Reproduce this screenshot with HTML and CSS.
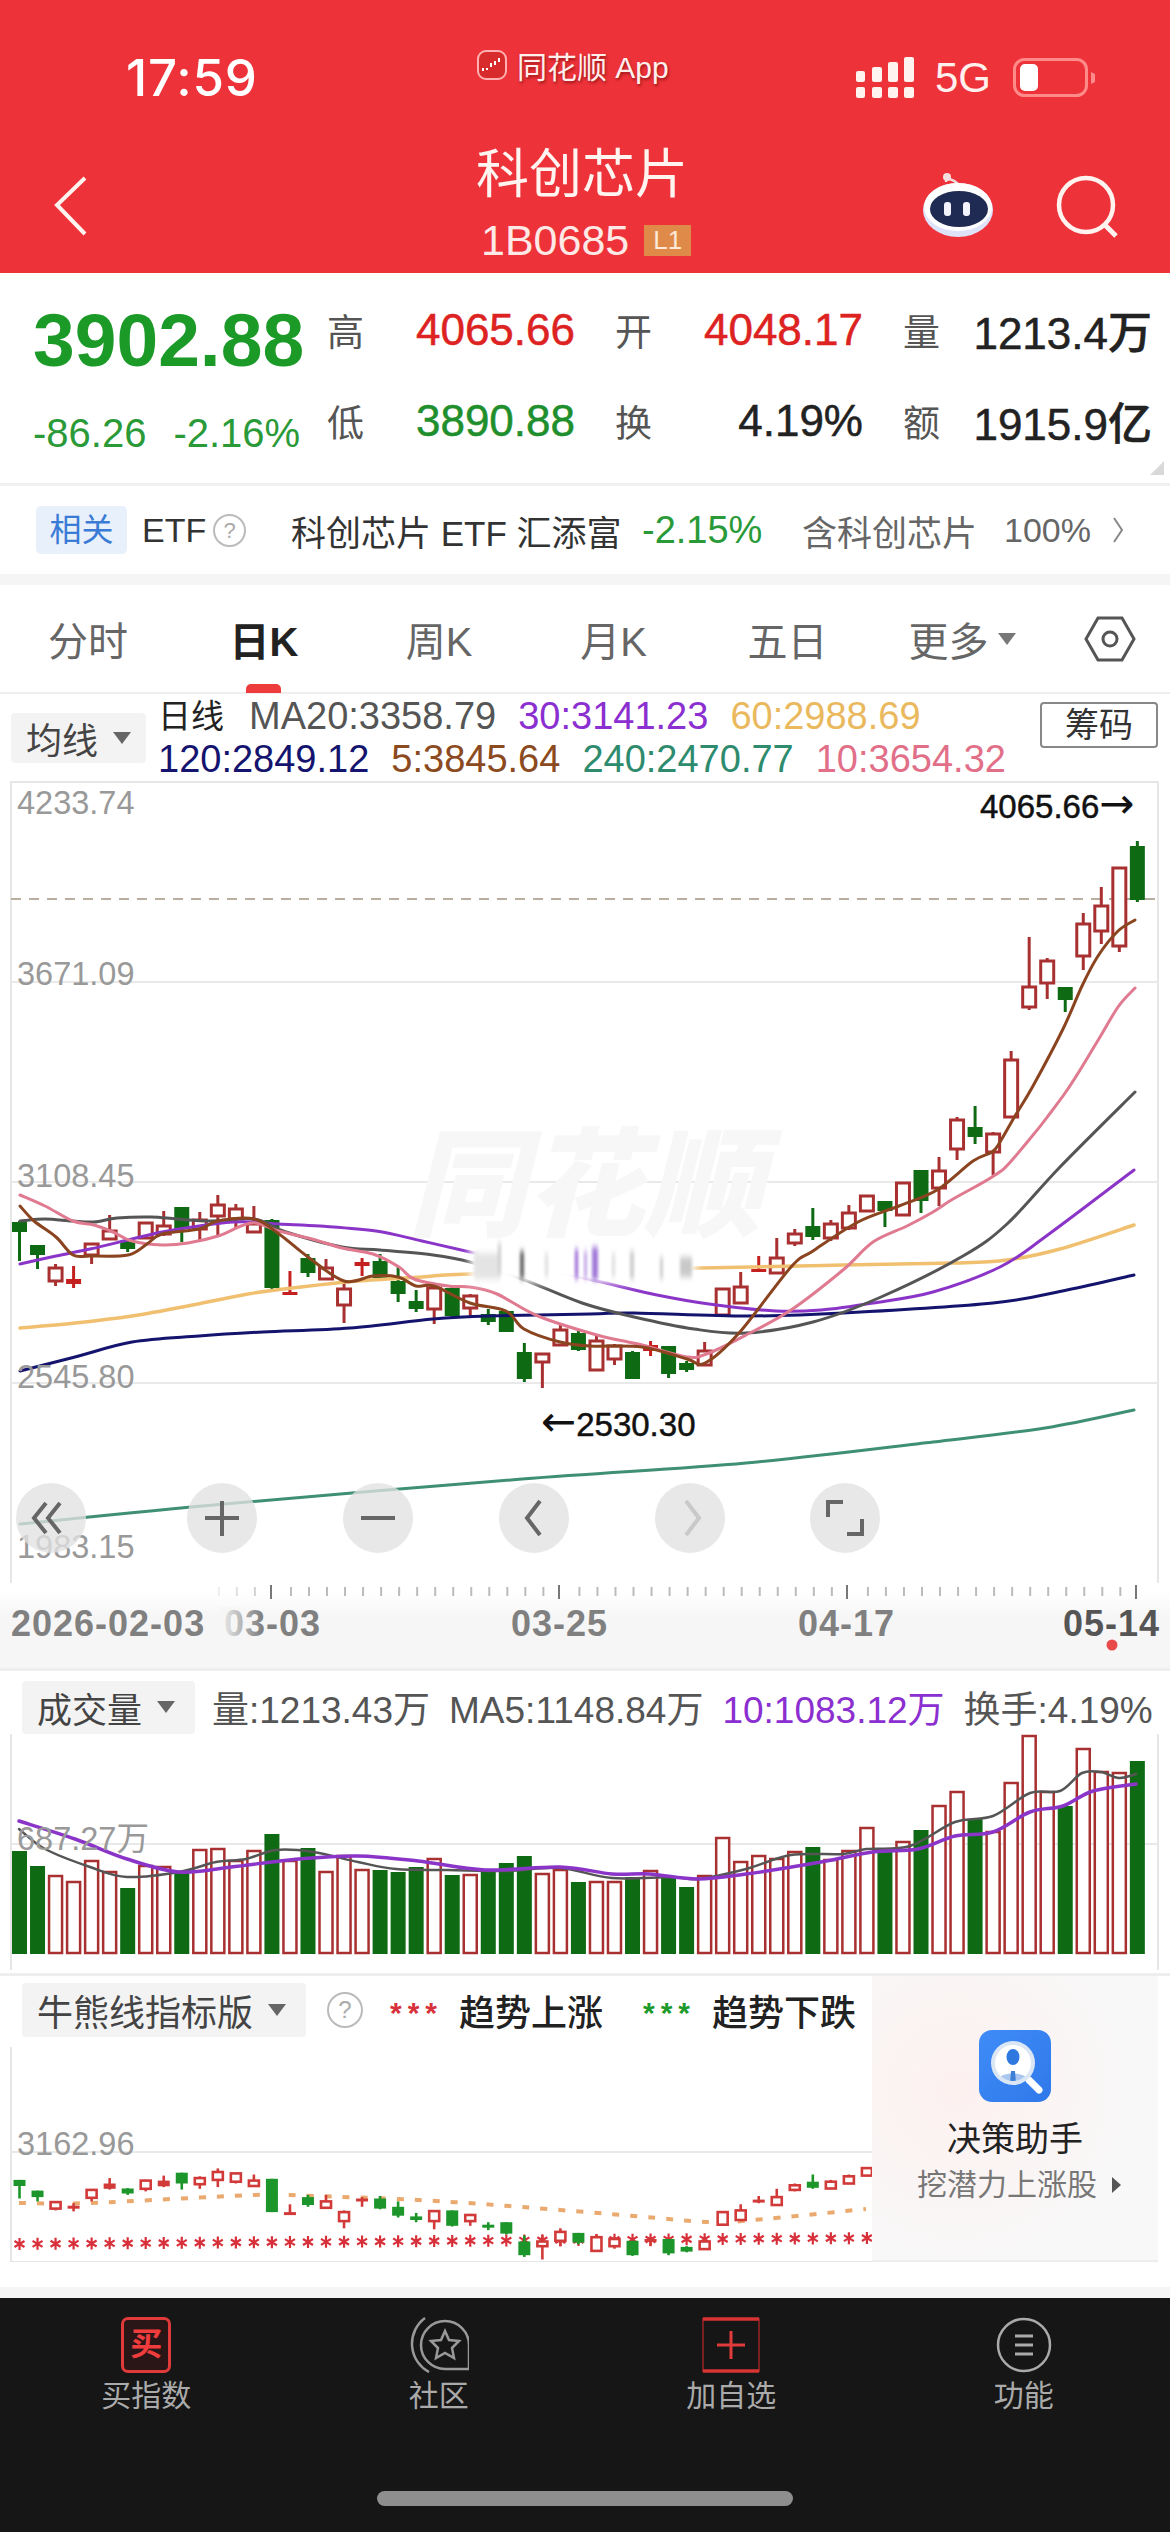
FILE: index.html
```html
<!DOCTYPE html>
<html lang="zh-CN">
<head>
<meta charset="utf-8">
<title>科创芯片</title>
<link rel="stylesheet" href="styles.css">
</head>
<body>
<header class="topbar">
  <div class="status">
    <div class="time">17:59</div>
    <div class="carrier">
      <svg class="logo" viewBox="0 0 30 30"><rect x="1" y="1" width="28" height="28" rx="8" fill="#d82b2b" stroke="#ffb0b0" stroke-width="2"/><path d="M6 21v-3M10 20v-2M14 17v-4M18 15v-4M22 12V8" stroke="#fff" stroke-width="2"/></svg>
      <span>同花顺 App</span>
    </div>
    <div class="sys">
      <svg class="signal" viewBox="0 0 58 41" fill="#fff3ef"><rect x="0" y="14" width="9" height="11" rx="2"/><rect x="16" y="10" width="10" height="15" rx="2"/><rect x="32" y="5" width="10" height="20" rx="2"/><rect x="48" y="0" width="10" height="25" rx="2"/><rect x="0" y="30" width="9" height="11" rx="2"/><rect x="16" y="30" width="10" height="11" rx="2"/><rect x="32" y="30" width="10" height="11" rx="2"/><rect x="48" y="30" width="10" height="11" rx="2"/></svg>
      <span class="net">5G</span>
      <svg class="battery" viewBox="0 0 83 40"><rect x="1.5" y="1.5" width="72" height="36" rx="10" fill="none" stroke="#ff8a8a" stroke-width="3"/><rect x="7" y="6" width="18" height="27" rx="5" fill="#fff"/><path d="M78 14l4 2v8l-4 2z" fill="#ff8a8a"/></svg>
    </div>
  </div>
  <div class="titlebar">
    <svg class="back" viewBox="0 0 34 60"><path d="M31 2L3 29l28 29" fill="none" stroke="#fff3f0" stroke-width="4"/></svg>
    <div class="title-block">
      <h1 class="title">科创芯片</h1>
      <div class="code"><span>1B0685</span><span class="lvl">L1</span></div>
    </div>
    <div class="actions">
      <svg class="robot" viewBox="0 0 72 66"><path d="M24 10C24 5 31 7 36 12" fill="none" stroke="#f3dede" stroke-width="2.5"/><circle cx="25" cy="5" r="4" fill="#f6dede"/><ellipse cx="36" cy="38" rx="35" ry="27" fill="#dfe3fa"/><ellipse cx="36" cy="35" rx="34" ry="24" fill="#fff"/><ellipse cx="37" cy="37" rx="29" ry="18" fill="#1f2b52"/><rect x="22" y="30" width="7" height="14" rx="3" fill="#f4f4ff"/><rect x="41" y="30" width="7" height="14" rx="3" fill="#f4f4ff"/></svg>
      <svg class="search" viewBox="0 0 64 64"><circle cx="30" cy="30" r="27" fill="none" stroke="#fff3f0" stroke-width="4.5"/><path d="M49 50l11 11" stroke="#fff3f0" stroke-width="5"/></svg>
    </div>
  </div>
</header>

<section class="quote">
  <div class="price-col">
    <div class="price">3902.88</div>
    <div class="change"><span>-86.26</span><span>-2.16%</span></div>
  </div>
  <div class="stats">
    <div class="stat"><span class="k">高</span><span class="v up">4065.66</span></div>
    <div class="stat"><span class="k">开</span><span class="v up">4048.17</span></div>
    <div class="stat"><span class="k">量</span><span class="v">1213.4万</span></div>
    <div class="stat"><span class="k">低</span><span class="v down">3890.88</span></div>
    <div class="stat"><span class="k">换</span><span class="v">4.19%</span></div>
    <div class="stat"><span class="k">额</span><span class="v">1915.9亿</span></div>
  </div>
  <span class="corner"></span>
</section>

<section class="related">
  <span class="badge">相关</span>
  <span class="etf">ETF</span>
  <span class="qmark">?</span>
  <span class="fund">科创芯片 ETF 汇添富</span>
  <span class="pct">-2.15%</span>
  <span class="incl">含科创芯片</span>
  <span class="incl-v">100%</span>
  <svg class="chev" viewBox="0 0 12 28"><path d="M2 2l8 12-8 12" fill="none" stroke="#888" stroke-width="2"/></svg>
</section>

<nav class="tabs">
  <span class="tab">分时</span>
  <span class="tab active">日K</span>
  <span class="tab">周K</span>
  <span class="tab">月K</span>
  <span class="tab">五日</span>
  <span class="tab">更多<i class="tri tri-sm"></i></span>
  <span class="tab"><svg class="hex" viewBox="0 0 52 46"><path d="M14 2h24l12 21-12 21H14L2 23z" fill="none" stroke="#555" stroke-width="3"/><circle cx="26" cy="23" r="7" fill="none" stroke="#555" stroke-width="3"/></svg></span>
</nav>

<section class="ma-head">
  <div class="sel sel-ma">均线<i class="tri"></i></div>
  <div class="ma-rows">
    <div class="ma-row"><span class="day">日线</span><span class="c20">MA20:3358.79</span><span class="c30">30:3141.23</span><span class="c60">60:2988.69</span></div>
    <div class="ma-row"><span class="c120">120:2849.12</span><span class="c5">5:3845.64</span><span class="c240">240:2470.77</span><span class="c10">10:3654.32</span></div>
  </div>
  <div class="chip">筹码</div>
</section>

<svg class="chart-main" viewBox="0 782 1170 802">
  <defs>
    <filter id="soft" x="-20%" y="-50%" width="140%" height="200%"><feGaussianBlur stdDeviation="4"/></filter>
    <filter id="streak" x="-20%" y="-50%" width="140%" height="200%"><feGaussianBlur stdDeviation="1.6 3"/></filter>
  </defs>
  <path class="frame" d="M11 1584V783H1158V1584"/>
  <path class="grid" d="M11 983H1158M11 1183H1158M11 1384H1158"/>
  <path class="dash" d="M11 900H1158"/>
  <text class="mark" x="408" y="1228">同花顺</text>
  <g id="candles"></g>
  <g id="lines"></g>
  <rect x="470" y="1246" width="226" height="38" fill="#fff" filter="url(#soft)"/>
  <g filter="url(#streak)">
    <rect x="474" y="1254" width="26" height="26" fill="#e4e4e4"/>
    <rect x="498" y="1244" width="3" height="32" fill="#ccc"/>
    <rect x="520" y="1252" width="4" height="28" fill="#666"/>
    <rect x="545" y="1254" width="3" height="24" fill="#ddd"/>
    <rect x="575" y="1250" width="3" height="30" fill="#9a63d6"/>
    <rect x="584" y="1252" width="3" height="28" fill="#c3a4e8"/>
    <rect x="592" y="1248" width="6" height="33" fill="#a27ad8"/>
    <rect x="612" y="1254" width="3" height="24" fill="#ddd"/>
    <rect x="630" y="1252" width="4" height="28" fill="#ccc"/>
    <rect x="660" y="1258" width="3" height="22" fill="#ccc"/>
    <rect x="680" y="1258" width="12" height="20" fill="#c9c9c9"/>
  </g>
  <text class="axis" x="17" y="815">4233.74</text>
  <text class="axis" x="17" y="986">3671.09</text>
  <text class="axis" x="17" y="1188">3108.45</text>
  <text class="axis" x="17" y="1389">2545.80</text>
  <text class="axis" x="17" y="1559">1983.15</text>
  <text class="peak" x="980" y="819">4065.66<tspan class="arr">→</tspan></text>
  <text class="peak" x="541" y="1437"><tspan class="arr">←</tspan>2530.30</text>
  <g class="tool">
    <circle cx="51" cy="1519" r="35"/><circle cx="222" cy="1519" r="35"/><circle cx="378" cy="1519" r="35"/><circle cx="534" cy="1519" r="35"/><circle cx="690" cy="1519" r="35"/><circle cx="845" cy="1519" r="35"/>
    <path d="M46 1504l-12 15 12 15M60 1504l-12 15 12 15"/>
    <path d="M205 1519h34M222 1502v35"/>
    <path d="M361 1519h34"/>
    <path d="M540 1502l-13 17 13 17"/>
    <path class="dim" d="M686 1502l13 17-13 17"/>
    <path d="M828 1518v-15h15M862 1520v15h-15"/>
  </g>
</svg>

<div class="axis-bar">
  <svg viewBox="0 1584 1170 76">
    <defs><linearGradient id="fade" x1="0" x2="1" y1="0" y2="0"><stop offset="0" stop-color="#f6f6f6" stop-opacity=".95"/><stop offset="1" stop-color="#f6f6f6" stop-opacity="0"/></linearGradient></defs>
    <g id="ticks"></g>
    <text class="date" x="11" y="1637">2026-02-03</text>
    <text class="date" x="224" y="1637">03-03</text>
    <rect x="220" y="1608" width="42" height="36" fill="url(#fade)"/>
    <text class="date" x="511" y="1637">03-25</text>
    <text class="date" x="798" y="1637">04-17</text>
    <text class="date last" x="1063" y="1637">05-14</text>
    <circle cx="1112" cy="1646" r="5.5" fill="#e84a4a"/>
  </svg>
</div>

<section class="vol">
  <div class="vol-head">
    <div class="sel sel-vol">成交量<i class="tri"></i></div>
    <span class="vol-t">量:1213.43万</span>
    <span class="vol-t">MA5:1148.84万</span>
    <span class="vol-t c30">10:1083.12万</span>
    <span class="vol-t">换手:4.19%</span>
  </div>
  <svg class="vol-chart" viewBox="0 1735 1170 236">
    <path class="frame" d="M11 1735V1971M1158 1735V1971"/>
    <path class="grid" d="M11 1845H1158"/>
    <g id="bars"></g>
    <g id="vlines"></g>
    <text class="axis" x="17" y="1851">687.27万</text>
  </svg>
</section>

<section class="bb">
  <div class="bb-left">
    <div class="bb-head">
      <div class="sel sel-bb">牛熊线指标版<i class="tri"></i></div>
      <span class="qmark q2">?</span>
      <span class="stars red">***</span><span class="leg">趋势上涨</span>
      <span class="stars green">***</span><span class="leg">趋势下跌</span>
    </div>
    <svg class="bb-chart" viewBox="0 2045 872 215">
      <path class="frame" d="M11 2045V2260H872"/>
      <path class="grid" d="M11 2150H872"/>
      <g id="mini"></g>
      <text class="axis" x="17" y="2153">3162.96</text>
    </svg>
  </div>
  <aside class="assist">
    <svg class="assist-ic" viewBox="0 0 72 72"><defs><linearGradient id="ib" x1="0" y1="0" x2="1" y2="1"><stop offset="0" stop-color="#3f8cf8"/><stop offset="1" stop-color="#2f78ea"/></linearGradient><clipPath id="lens"><circle cx="34" cy="33" r="18"/></clipPath></defs><rect width="72" height="72" rx="13" fill="url(#ib)"/><path d="M50 50l10 10" stroke="#fff" stroke-width="7" stroke-linecap="round"/><circle cx="34" cy="33" r="22" fill="#dbe6f5"/><circle cx="34" cy="33" r="18" fill="#fff"/><g clip-path="url(#lens)"><path d="M16 54c0-14 36-14 36 0z" fill="#a9c7ef"/><path d="M32 41h4l1 13h-6z" fill="#3f7fd8"/></g><ellipse cx="34" cy="27" rx="6.5" ry="8" fill="#2f78e0"/></svg>
    <div class="assist-t">决策助手</div>
    <div class="assist-s">挖潜力上涨股<i class="tri-r"></i></div>
  </aside>
</section>
<div class="band"></div>

<footer class="bottom">
  <div class="navs">
    <div class="nav-i">
      <span class="buy">买</span>
      <span class="lab">买指数</span>
    </div>
    <div class="nav-i">
      <svg class="ic" viewBox="0 0 60 56"><path d="M60 52H36A24 24 0 1 1 60 28Z" fill="none" stroke="#999" stroke-width="2.5"/><path d="M16 1A32 32 0 0 0 20 55" fill="none" stroke="#999" stroke-width="2.5"/><path d="M36 14l4 9 10 1-7 7 2 10-9-5-9 5 2-10-7-7 10-1z" fill="none" stroke="#999" stroke-width="2.5"/></svg>
      <span class="lab">社区</span>
    </div>
    <div class="nav-i">
      <svg class="ic" viewBox="0 0 60 56"><rect x="2" y="2" width="56" height="52" fill="none" stroke="#7a2020" stroke-width="2"/><path d="M2 2H58M2 54H58" stroke="#d93333" stroke-width="3.5"/><path d="M16 28h28M30 14v28" stroke="#e03a3a" stroke-width="3"/></svg>
      <span class="lab">加自选</span>
    </div>
    <div class="nav-i">
      <svg class="ic" viewBox="0 0 60 56"><circle cx="30" cy="28" r="26" fill="none" stroke="#aaa" stroke-width="2.5"/><path d="M21 19h18M21 28h18M21 37h18" stroke="#aaa" stroke-width="3"/></svg>
      <span class="lab">功能</span>
    </div>
  </div>
  <div class="home"></div>
</footer>
<script src="script.js"></script>
</body>
</html>
```
FILE: styles.css
```css
* { box-sizing: border-box; }
html, body { margin: 0; padding: 0; width: 1170px; background: #fff; overflow-x: hidden; }
body { font-family: "Liberation Sans", "Noto Sans CJK SC", sans-serif; color: #333; }
svg { display: block; }

.topbar { height: 273px; background: #ee3239; color: #fff; }
.status { height: 140px; display: grid; grid-template-columns: 470px 376px 1fr; }
.time { font-family: Inter, "Liberation Sans", sans-serif; font-size: 51px; font-weight: 500; padding: 50px 0 0 126px; line-height: 56px; letter-spacing: .8px; }
.carrier { display: flex; align-items: center; height: 30px; margin-top: 50px; gap: 10px; padding-left: 7px; font-size: 30px; text-shadow: 1px 2px 3px rgba(80,0,0,.55); color: #fff0ee; }
.logo { width: 30px; height: 30px; }
.sys { display: flex; align-items: center; padding: 57px 0 0 10px; height: 98px; color: #fff0ee; }
.signal { width: 58px; height: 41px; }
.net { font-size: 42px; margin-left: 21px; line-height: 41px; }
.battery { width: 83px; height: 40px; margin-left: 22px; }

.titlebar { display: grid; grid-template-columns: 476px 442px 1fr; height: 133px; }
.back { width: 34px; height: 60px; margin: 36px 0 0 54px; }
.title { font-size: 53px; font-weight: 400; line-height: 60px; margin: 5px 0 0; color: #fff4f0; }
.code { display: flex; align-items: center; gap: 15px; margin-top: 19px; font-size: 43px; line-height: 32px; color: #ffe9e6; }
.code span:first-child { margin-left: 5px; }
.lvl { width: 47px; height: 31px; background: #e08a4a; color: #fde9d8; font-size: 26px; text-align: center; line-height: 31px; }
.actions { display: flex; padding: 32px 0 0 4px; gap: 62px; }
.robot { width: 72px; height: 66px; }
.search { width: 64px; height: 64px; margin-top: 3px; }

.quote { display: flex; height: 213px; padding-left: 33px; border-bottom: 3px solid #f0f0f0; position: relative; }
.price-col { width: 294px; }
.price { font-size: 75px; font-weight: 700; color: #1b9a28; line-height: 80px; margin-top: 27px; }
.change { display: flex; gap: 27px; font-size: 40px; line-height: 50px; margin-top: 28px; color: #2a9a38; }
.stats { display: grid; grid-template-columns: 248px 248px 249px; column-gap: 40px; grid-auto-rows: 91px; padding-top: 11px; }
.stat { display: flex; justify-content: space-between; align-items: center; }
.k { font-size: 37px; color: #555; }
.v { font-size: 44px; color: #222; font-weight: 500; -webkit-text-stroke: .5px currentColor; }
.up { color: #dd2222; }
.down { color: #1f8f2d; }
.corner { position: absolute; right: 6px; bottom: 8px; width: 0; height: 0; border-left: 14px solid transparent; border-bottom: 14px solid #d9d9d9; }

.related { height: 88px; display: flex; align-items: center; padding-left: 36px; font-size: 35px; }
.badge { width: 91px; height: 48px; line-height: 48px; background: #e8f0fc; color: #3a7bd5; text-align: center; font-size: 32px; border-radius: 5px; }
.etf { margin-left: 15px; width: 61px; color: #333; font-size: 34px; }
.qmark { margin-left: 10px; width: 33px; height: 33px; border: 2px solid #bbb; border-radius: 50%; color: #aaa; font-size: 22px; line-height: 29px; text-align: center; }
.fund { margin-left: 45px; width: 351px; color: #333; white-space: nowrap; }
.pct { width: 160px; color: #2a9a38; font-size: 38px; }
.incl { width: 202px; color: #666; }
.incl-v { width: 108px; color: #666; font-size: 34px; }
.chev { width: 12px; height: 28px; }

.tabs { border-top: 11px solid #f5f5f5; height: 120px; display: grid; grid-template-columns: 176px 176px 174px 175px 173px 176px 120px; border-bottom: 2px solid #eee; }
.tab { display: flex; align-items: center; justify-content: center; font-size: 40px; color: #666; position: relative; }
.tab.active { color: #222; font-weight: 700; }
.tab.active::after { content: ""; position: absolute; bottom: -1px; left: 70px; width: 35px; height: 9px; background: #ee3b3b; border-radius: 5px 5px 0 0; }
.hex { width: 52px; height: 46px; }
.tri { display: inline-block; width: 0; height: 0; border-left: 9px solid transparent; border-right: 9px solid transparent; border-top: 12px solid #666; margin-left: 15px; }
.tri-sm { margin-left: 9px; border-top-color: #777; }

.ma-head { display: flex; height: 87px; padding-left: 11px; }
.sel { display: flex; align-items: center; background: #f3f3f3; border-radius: 4px; color: #444; flex-shrink: 0; }
.sel-ma { width: 135px; height: 50px; margin-top: 19px; padding-left: 15px; font-size: 36px; }
.ma-rows { margin-left: 12px; padding-top: 1px; width: 882px; }
.ma-row { display: flex; gap: 22px; height: 43px; line-height: 43px; font-size: 38px; white-space: nowrap; }
.day { color: #222; font-size: 33px; margin-right: 3px; }
.c20 { color: #555; } .c30 { color: #8b2fd0; } .c60 { color: #eab95e; }
.c120 { color: #14146e; } .c5 { color: #8b4a20; } .c240 { color: #2e8b6e; } .c10 { color: #e26f88; }
.chip { width: 118px; height: 46px; margin: 8px 0 0 0; border: 2px solid #888; border-radius: 4px; font-size: 34px; line-height: 42px; text-align: center; color: #333; }

.chart-main { width: 1170px; height: 802px; }
.frame { fill: none; stroke: #e6e6e6; stroke-width: 2; }
.grid { fill: none; stroke: #e9e9e9; stroke-width: 2; }
.dash { fill: none; stroke: #b8ad9e; stroke-width: 2; stroke-dasharray: 10 8; }
.mark { font-size: 118px; font-weight: 900; fill: #f7f7f7; font-style: italic; }
.axis { font-size: 32.5px; fill: #999; }
.peak { font-size: 33px; fill: #111; font-weight: 500; stroke: #111; stroke-width: .5px; }
.arr { font-family: "DejaVu Sans", sans-serif; font-size: 42px; stroke-width: 0; }
.tool circle { fill: #e2e2e2; fill-opacity: .78; stroke: none; }
.tool path { fill: none; stroke: #666; stroke-width: 4; }
.tool path.dim { stroke: #c9c9c9; }

.axis-bar { height: 85px; background: linear-gradient(#fff 10%, #f6f6f6 40%); }
.axis-bar svg { width: 1170px; height: 76px; }
.tick { stroke: #bbb; stroke-width: 2; }
.tick.major { stroke: #777; }
.date { font-size: 36px; fill: #808080; font-weight: 700; letter-spacing: 1px; }
.date.last { fill: #555; }

.vol { height: 305px; border-top: 3px solid #eee; }
.vol-head { display: flex; align-items: center; height: 63px; padding: 9px 0 0 22px; font-size: 37px; color: #555; white-space: nowrap; }
.sel-vol { width: 173px; height: 53px; padding-left: 15px; font-size: 35px; margin-right: 17px; }
.vol-t { margin-right: 19px; flex-shrink: 0; }
.vol-t:last-child { margin-right: 0; }
.vol-chart { width: 1170px; height: 236px; }

.bb { display: flex; height: 315px; border-top: 3px solid #eee; }
.bb-left { width: 872px; }
.bb-head { display: flex; align-items: center; height: 68px; padding: 0 0 0 22px; white-space: nowrap; }
.sel-bb { width: 284px; height: 54px; padding-left: 15px; font-size: 36px; }
.q2 { margin-left: 21px; width: 36px; height: 36px; font-size: 24px; line-height: 32px; }
.stars { font-size: 30px; font-weight: 700; letter-spacing: 6px; width: 69px; margin-left: 27px; padding-top: 6px; }
.red { color: #d8303a; } .green { color: #1c9a2a; }
.leg { font-size: 36px; color: #222; font-weight: 500; width: 146px; }
.leg + .stars { margin-left: 38px; }
.bb-chart { width: 872px; height: 215px; margin-top: 3px; }
.assist { width: 286px; height: 286px; display: flex; flex-direction: column; align-items: center; background: radial-gradient(circle at 30% 40%, #fdf1f0, #f8f8f8 70%); border-bottom: 2px solid #eee; }
.assist-ic { width: 72px; height: 72px; margin-top: 54px; }
.assist-t { font-size: 34px; color: #222; margin-top: 15px; line-height: 44px; }
.assist-s { font-size: 30px; color: #777; margin-top: 2px; line-height: 44px; display: flex; align-items: center; white-space: nowrap; margin-left: 8px; }
.tri-r { width: 0; height: 0; border-top: 8px solid transparent; border-bottom: 8px solid transparent; border-left: 9px solid #555; margin-left: 15px; }

.band { height: 11px; background: #f5f5f5; margin-top: -1px; }
.bottom { height: 234px; background: #161616; }
.navs { display: grid; grid-template-columns: repeat(4, 1fr); padding-top: 19px; }
.nav-i { display: flex; flex-direction: column; align-items: center; }
.ic { width: 60px; height: 56px; }
.buy { width: 50px; height: 56px; border: 3px solid #e03a3a; border-radius: 7px; color: #f03c3c; font-size: 32px; font-weight: 700; line-height: 48px; text-align: center; background: #2a1616; }
.lab { font-size: 30px; color: #aaa; line-height: 40px; margin-top: 3px; }
.home { width: 416px; height: 15px; border-radius: 8px; background: #8e8e8e; margin: 75px auto 0; }
```
FILE: script.js
```js
const X = (i) => 19.5 + 18.03 * i;
const C_RED = "#a83030", C_FILL = "#c42020", C_GREEN = "#0e6b14";

const candles = [
["g",1222,1223,1233,1262],["g",1246,1246,1256,1270],["r",1265,1269,1282,1287],["f",1267,1280,1285,1289],
["r",1245,1245,1256,1265],["r",1216,1232,1240,1241],["g",1240,1243,1250,1253],["r",1223,1224,1239,1240],
["r",1212,1227,1235,1237],["g",1208,1208,1230,1243],["r",1213,1221,1230,1242],["r",1196,1206,1217,1237],
["r",1205,1210,1220,1230],["r",1207,1225,1233,1233],["g",1220,1221,1289,1290],["f",1272,1293,1295,1295],
["g",1255,1259,1274,1278],["r",1260,1269,1280,1280],["r",1283,1290,1306,1324],["f",1259,1263,1267,1277],
["g",1255,1262,1279,1280],["g",1267,1282,1295,1303],["g",1291,1302,1310,1313],["r",1287,1289,1310,1325],
["g",1288,1289,1317,1318],["r",1295,1297,1309,1317],["g",1310,1315,1323,1326],["g",1312,1312,1333,1333],
["g",1344,1353,1380,1383],["r",1355,1355,1363,1389],["r",1325,1331,1346,1346],["g",1332,1334,1351,1352],
["r",1336,1342,1371,1371],["r",1345,1347,1360,1366],["g",1352,1353,1380,1380],["f",1342,1346,1352,1357],
["g",1347,1347,1375,1379],["g",1362,1364,1371,1373],["r",1343,1352,1366,1367],["r",1289,1290,1316,1317],
["r",1273,1288,1304,1304],["f",1257,1270,1272,1273],["r",1239,1259,1274,1274],["r",1230,1235,1244,1247],
["g",1209,1227,1238,1241],["r",1221,1225,1239,1242],["r",1206,1214,1229,1231],["r",1196,1197,1212,1212],
["g",1202,1202,1212,1228],["r",1183,1184,1216,1217],["g",1171,1171,1202,1214],["r",1158,1172,1189,1207],
["r",1118,1121,1150,1161],["g",1107,1128,1138,1145],["r",1133,1135,1153,1176],["r",1052,1061,1118,1119],
["r",938,988,1008,1011],["r",959,962,984,1000],["g",988,988,1001,1013],["r",914,925,957,971],
["r",888,907,932,945],["r",868,869,947,953],["g",842,847,901,903]
];

function candleSvg(list, conv, w, red, fill, green, sw) {
  return list.map((c, i) => {
    const x = X(i), t = c[0];
    const [hi, top, bot, lo] = c.slice(1).map(conv);
    const col = t === "g" ? green : t === "f" ? fill : red;
    let s = `<line x1="${x}" x2="${x}" y1="${hi}" y2="${lo}" stroke="${col}" stroke-width="${sw}"/>`;
    if (t === "r") s += `<rect x="${x - w / 2}" y="${top}" width="${w}" height="${bot - top}" fill="#fff" stroke="${col}" stroke-width="${sw}"/>`;
    else s += `<rect x="${x - w / 2 - 1}" y="${top}" width="${w + 2}" height="${Math.max(bot - top, 3)}" fill="${col}"/>`;
    return s;
  }).join("");
}

function smooth(p) {
  let d = `M${p[0][0]} ${p[0][1]}`;
  for (let i = 0; i < p.length - 1; i++) {
    const a = p[i - 1] || p[i], b = p[i], c = p[i + 1], e = p[i + 2] || c;
    const k = 6;
    d += `C${(b[0] + (c[0] - a[0]) / k).toFixed(1)} ${(b[1] + (c[1] - a[1]) / k).toFixed(1)} ${(c[0] - (e[0] - b[0]) / k).toFixed(1)} ${(c[1] - (e[1] - b[1]) / k).toFixed(1)} ${c[0]} ${c[1]}`;
  }
  return d;
}
const line = (p, col, w) => `<path d="${smooth(p)}" fill="none" stroke="${col}" stroke-width="${w}" stroke-linecap="round"/>`;

const ma5 = [[20,1207],[34,1222],[56,1238],[73,1256],[90,1257],[128,1256],[147,1245],[162,1235],[199,1230],[218,1222],[254,1220],[279,1235],[308,1258],[344,1282],[373,1277],[398,1278],[416,1287],[434,1287],[470,1304],[506,1312],[524,1330],[560,1343],[590,1347],[642,1348],[687,1360],[705,1364],[739,1334],[791,1268],[813,1252],[858,1223],[899,1207],[937,1191],[973,1162],[992,1153],[1000,1143],[1015,1117],[1033,1087],[1063,1030],[1082,987],[1098,957],[1118,932],[1135,921]];
const ma10 = [[20,1196],[45,1207],[73,1222],[94,1226],[113,1233],[132,1242],[162,1246],[188,1244],[218,1237],[241,1227],[256,1224],[279,1232],[312,1240],[342,1249],[373,1255],[399,1268],[414,1280],[448,1287],[470,1288],[497,1295],[538,1317],[597,1336],[642,1346],[687,1358],[709,1354],[746,1336],[791,1311],[843,1271],[873,1243],[907,1227],[933,1213],[953,1200],[992,1178],[1013,1160],[1063,1097],[1097,1043],[1118,1008],[1135,989]];
const ma20 = [[20,1222],[45,1220],[72,1222],[94,1223],[117,1219],[151,1218],[177,1220],[211,1222],[254,1220],[286,1233],[342,1248],[380,1251],[433,1256],[470,1263],[522,1280],[582,1304],[634,1318],[694,1330],[746,1334],[813,1323],[881,1298],[963,1257],[1007,1225],[1060,1168],[1135,1093]];
const ma30 = [[20,1265],[56,1257],[90,1250],[132,1240],[162,1233],[199,1227],[233,1223],[256,1223],[279,1225],[320,1227],[376,1232],[422,1242],[470,1253],[597,1282],[657,1296],[709,1305],[776,1312],[821,1311],[873,1304],[933,1293],[1000,1268],[1045,1238],[1134,1171]];
const ma60 = [[20,1329],[75,1324],[132,1317],[188,1307],[248,1295],[301,1288],[358,1282],[422,1278],[470,1275],[701,1269],[843,1266],[955,1264],[1007,1261],[1060,1250],[1134,1226]];
const ma120 = [[20,1372],[75,1358],[132,1343],[199,1337],[263,1333],[350,1329],[433,1320],[489,1317],[590,1315],[634,1314],[746,1317],[843,1314],[993,1304],[1067,1291],[1134,1276]];
const ma240 = [[20,1525],[224,1505],[522,1480],[746,1464],[933,1443],[1045,1429],[1134,1411]];

document.getElementById("candles").innerHTML = candleSvg(candles, (v) => v, 13, C_RED, C_FILL, C_GREEN, 3);
document.getElementById("lines").innerHTML =
  line(ma240, "#3f8f74", 3) + line(ma120, "#14146e", 3) + line(ma60, "#f0c070", 3.5) +
  line(ma30, "#8b35c8", 3) + line(ma20, "#555", 3) + line(ma10, "#e07a90", 3) + line(ma5, "#8b4420", 3);

let ticks = "";
const majors = { 14: 271, 30: 559, 46: 847, 62: 1136 };
for (let i = 11; i <= 62; i++) {
  const major = i in majors;
  const lx = major ? majors[i] : X(i) + 1;
  const op = i < 14 ? 0.25 + (i - 11) * 0.2 : 1;
  ticks += `<line class="tick${major ? " major" : ""}" opacity="${op}" x1="${lx}" x2="${lx}" y1="${major ? 1586 : 1588}" y2="${major ? 1600 : 1597}"/>`;
}
document.getElementById("ticks").innerHTML = ticks;

const vol = [1852,1867,1877,1883,1862,1873,1889,1867,1868,1873,1851,1850,1862,1852,1835,1862,1849,1873,1857,1871,1871,1873,1868,1860,1876,1876,1873,1864,1857,1875,1871,1883,1883,1883,1878,1872,1878,1888,1877,1839,1863,1857,1860,1853,1848,1861,1852,1829,1853,1843,1831,1807,1793,1820,1833,1784,1737,1793,1807,1750,1773,1774,1762];
const isGreen = new Set([0,1,6,9,14,16,20,21,22,24,26,27,28,31,34,36,37,44,48,50,53,58,62]);
document.getElementById("bars").innerHTML = vol.map((t, i) => {
  const x = X(i);
  return isGreen.has(i)
    ? `<rect x="${x - 7.5}" y="${t}" width="15" height="${1955 - t}" fill="${C_GREEN}"/>`
    : `<rect x="${x - 6.5}" y="${t}" width="13" height="${1954 - t}" fill="#fff" stroke="${C_RED}" stroke-width="2.5"/>`;
}).join("");

const vx = [19,45,90,127,179,216,246,276,313,358,396,448,507,560,612,672,698,746,791,843,866,910,955,993,1030,1060,1082,1101,1119,1136];
const vy = [1830,1850,1868,1878,1873,1863,1860,1851,1853,1863,1870,1871,1872,1869,1879,1878,1880,1870,1856,1855,1850,1847,1823,1817,1794,1792,1774,1773,1779,1775];
const px = [19,75,127,179,231,299,358,418,485,560,612,649,698,746,821,873,918,955,993,1030,1063,1093,1136];
const py = [1822,1840,1860,1873,1868,1860,1857,1862,1871,1868,1875,1875,1880,1875,1863,1853,1850,1837,1833,1813,1807,1792,1785];
document.getElementById("vlines").innerHTML =
  line(vx.map((x, i) => [x, vy[i]]), "#555", 2.5) + line(px.map((x, i) => [x, py[i]]), "#8b35c8", 3.5);

const mini = [
["g",580,580,597,632],["g",610,610,628,640],["r",640,642,660,665],["f",645,652,660,668],["r",607,608,630,640],["f",575,590,605,607],
["g",603,604,618,622],["r",580,582,605,612],["f",568,582,598,600],["g",560,560,590,607],["r",570,575,592,605],["r",548,558,580,600],
["r",560,562,585,590],["r",565,582,597,598],["g",577,577,670,670],["f",648,670,676,678],["g",622,628,650,655],["r",622,640,658,660],
["r",665,670,695,715],["f",628,632,636,655],["g",625,632,660,662],["g",640,655,680,685],["g",672,682,692,698],["r",665,667,695,718],
["g",665,665,708,710],["r",675,678,695,708],["g",698,705,712,720],["g",698,698,730,732],["g",735,752,790,795],["r",735,752,765,802],
["r",715,725,750,765],["g",728,728,755,760],["r",732,740,778,780],["r",740,745,765,772],["g",750,750,790,792],["f",740,745,752,765],
["g",745,745,785,790],["g",765,767,780,782],["r",745,752,773,775],["r",668,670,705,708],["r",648,665,692,695],["f",625,635,643,645],
["r",605,628,650,652],["r",590,595,608,612],["g",565,585,602,605],["r",580,585,604,606],["r",565,570,590,592],["r",545,547,568,570]
];
const toY = (z) => +(1970 + z / 2.79).toFixed(1);
const dots = [[19,2201],[90,2201],[254,2193],[313,2194],[418,2198],[522,2205],[634,2214],[709,2220],[754,2218],[866,2207]];
let stars = "";
mini.forEach((_, i) => {
  const x = X(i), y = 2242 - (i / 47) * 6;
  stars += `<path d="M${x} ${y - 6}V${y + 6}M${x - 5} ${y - 3}L${x + 5} ${y + 3}M${x - 5} ${y + 3}L${x + 5} ${y - 3}" stroke="#d8303a" stroke-width="2.2"/>`;
});
document.getElementById("mini").innerHTML =
  `<path d="${smooth(dots)}" fill="none" stroke="#eaa96e" stroke-width="4" stroke-dasharray="7 11"/>` +
  stars + candleSvg(mini, toY, 10, "#d23a3a", "#d23a3a", "#1c962a", 2.6);
```
